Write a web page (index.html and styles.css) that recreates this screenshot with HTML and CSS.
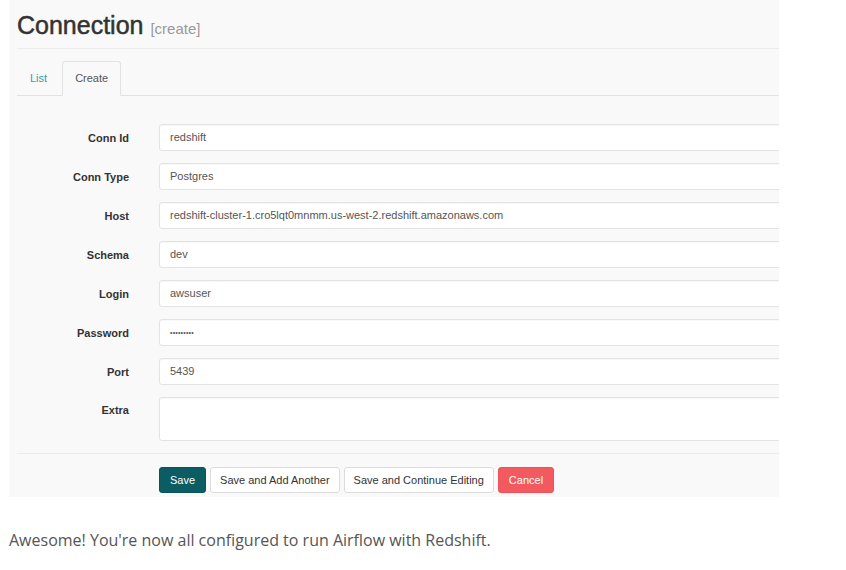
FILE: index.html
```html
<!DOCTYPE html>
<html>
<head>
<meta charset="utf-8">
<link rel="stylesheet" href="styles.css">
</head>
<body>
<div class="panel">
  <h2 class="title">Connection <small>[create]</small></h2>
  <ul class="tabs">
    <li class="tab"><a class="tab-link">List</a></li>
    <li class="tab active"><a class="tab-link">Create</a></li>
  </ul>
  <form class="form">
    <label class="label">Conn Id</label>
    <div class="input">redshift</div>
    <label class="label">Conn Type</label>
    <div class="input">Postgres</div>
    <label class="label">Host</label>
    <div class="input">redshift-cluster-1.cro5lqt0mnmm.us-west-2.redshift.amazonaws.com</div>
    <label class="label">Schema</label>
    <div class="input">dev</div>
    <label class="label">Login</label>
    <div class="input">awsuser</div>
    <label class="label">Password</label>
    <div class="input pass">&bull;&bull;&bull;&bull;&bull;&bull;&bull;&bull;&bull;</div>
    <label class="label">Port</label>
    <div class="input">5439</div>
    <label class="label label-top">Extra</label>
    <div class="input textarea"></div>
  </form>
  <div class="actions">
    <span class="btn btn-primary">Save</span>
    <span class="btn">Save and Add Another</span>
    <span class="btn">Save and Continue Editing</span>
    <span class="btn btn-danger">Cancel</span>
  </div>
</div>
<p class="note">Awesome! You're now all configured to run Airflow with Redshift.</p>
</body>
</html>
```

FILE: styles.css
```css
html, body {
  margin: 0;
  padding: 0;
  background: #ffffff;
}

.panel {
  width: 770px;
  height: 497px;
  margin-left: 9px;
  padding-left: 8px;
  box-sizing: border-box;
  background: #f9f9f9;
  overflow: hidden;
  font-family: "Liberation Sans", Arial, sans-serif;
}

.title {
  margin: 0;
  height: 49px;
  box-sizing: border-box;
  padding-top: 10px;
  border-bottom: 1px solid #ececec;
  font-size: 25px;
  font-weight: 400;
  -webkit-text-stroke: 0.5px #333;
  color: #333;
  line-height: 31px;
}

.title small {
  font-size: 15px;
  color: #999;
  -webkit-text-stroke: 0;
  font-weight: 400;
}

.tabs {
  list-style: none;
  margin: 12px 0 0 0;
  padding: 0;
  display: flex;
  border-bottom: 1px solid #e2e2e2;
  height: 34px;
}

.tab {
  margin-right: 2px;
  margin-bottom: -1px;
}

.tab-link {
  display: block;
  height: 34px;
  box-sizing: border-box;
  padding: 10px 12px 0 12px;
  font-size: 11px;
  color: #2fa0ab;
  border: 1px solid transparent;
  border-radius: 3px 3px 0 0;
}

.tab.active .tab-link {
  color: #555;
  background: #f9f9f9;
  border-color: #e2e2e2;
  border-bottom-color: #f9f9f9;
  height: 35px;
}

.form {
  display: grid;
  grid-template-columns: 112px 700px;
  column-gap: 30px;
  row-gap: 12px;
  margin-top: 28px;
  align-items: center;
}

.label {
  text-align: right;
  font-size: 11px;
  font-weight: 700;
  color: #333;
}

.label-top {
  align-self: start;
  padding-top: 7px;
}

.input {
  height: 27px;
  box-sizing: border-box;
  background: #fff;
  border: 1px solid #e3e3e3;
  border-radius: 3px;
  padding: 0 10px;
  font-size: 11px;
  line-height: 25px;
  color: #555;
  box-shadow: inset 0 1px 1px rgba(0, 0, 0, 0.03);
}

.pass {
  font-size: 7px;
  letter-spacing: 0.2px;
}

.textarea {
  height: 44px;
}

.actions {
  margin-top: 12px;
  border-top: 1px solid #ececec;
  padding-top: 13px;
  padding-left: 142px;
  display: flex;
  gap: 4px;
}

.btn {
  display: inline-block;
  height: 26px;
  box-sizing: border-box;
  padding: 0 9px;
  border: 1px solid #dcdcdc;
  border-radius: 3px;
  background: #fff;
  color: #333;
  font-size: 11px;
  line-height: 24px;
}

.btn-primary {
  background: #0c5c63;
  border-color: #0a545a;
  color: #fff;
  padding: 0 10px;
}

.btn-danger {
  background: #f25a60;
  border-color: #f05058;
  color: #fff;
  padding: 0 10px;
}

.note {
  margin: 32px 0 0 9px;
  font-family: "Open Sans", sans-serif;
  font-size: 16px;
  color: #555;
}
```
